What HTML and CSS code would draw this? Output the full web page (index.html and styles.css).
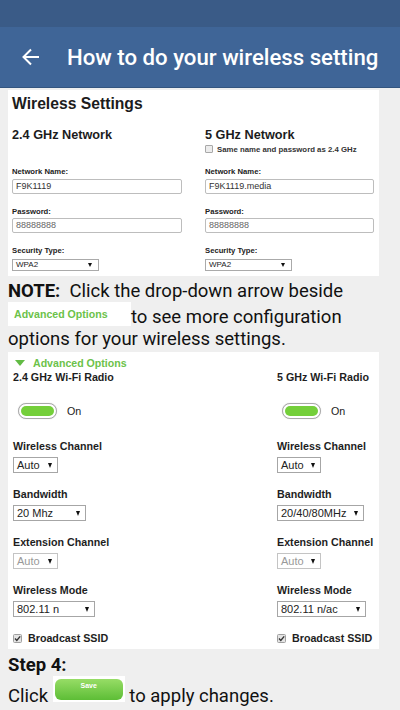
FILE: index.html
```html
<!DOCTYPE html>
<html>
<head>
<meta charset="utf-8">
<link rel="stylesheet" href="styles.css">
</head>
<body>
<div class="status"></div>
<header class="appbar">
  <svg class="back" viewBox="0 0 18 18" width="18" height="18"><path d="M1.5 9H17M9 1.5L1.5 9L9 16.5" fill="none" stroke="#fff" stroke-width="2"/></svg>
  <h1>How to do your wireless setting</h1>
</header>
<main class="content">
  <section class="shot ws">
    <h2>Wireless Settings</h2>
    <div class="ws-grid">
      <div class="ws-col">
        <h3>2.4 GHz Network</h3>
        <div class="same"></div>
        <div class="lbl first">Network Name:</div>
        <div class="inp left">F9K1119</div>
        <div class="lbl">Password:</div>
        <div class="inp left pw">88888888</div>
        <div class="lbl">Security Type:</div>
        <div class="sel"><span>WPA2</span><i class="tri small"></i></div>
      </div>
      <div class="ws-col">
        <h3>5 GHz Network</h3>
        <div class="same"><span class="box"></span>Same name and password as 2.4 GHz</div>
        <div class="lbl first">Network Name:</div>
        <div class="inp right">F9K1119.media</div>
        <div class="lbl">Password:</div>
        <div class="inp right pw">88888888</div>
        <div class="lbl">Security Type:</div>
        <div class="sel"><span>WPA2</span><i class="tri small"></i></div>
      </div>
    </div>
  </section>

  <p class="note"><b>NOTE:</b>&nbsp; <span>Click the drop-down arrow beside</span> <span class="badge">Advanced Options</span><span>to see more configuration</span> <span>options for your wireless settings.</span></p>

  <section class="shot adv">
    <div class="adv-head"><i class="gtri"></i>Advanced Options</div>
    <div class="adv-grid">
      <div class="adv-col">
        <div class="radio-title">2.4 GHz Wi-Fi Radio</div>
        <div class="toggle-row"><span class="toggle"><span class="knob"></span></span><span class="on">On</span></div>
        <div class="f-lbl first">Wireless Channel</div>
        <div class="f-sel w45"><span>Auto</span><i class="tri"></i></div>
        <div class="f-lbl">Bandwidth</div>
        <div class="f-sel w73"><span>20 Mhz</span><i class="tri"></i></div>
        <div class="f-lbl">Extension Channel</div>
        <div class="f-sel w45 dis"><span>Auto</span><i class="tri"></i></div>
        <div class="f-lbl">Wireless Mode</div>
        <div class="f-sel w82"><span>802.11 n</span><i class="tri"></i></div>
        <div class="bc"><svg class="chk" viewBox="0 0 9 9" width="9" height="9"><rect x="0.5" y="0.5" width="8" height="8" rx="1" fill="#e4e4e4" stroke="#a0a0a0"/><path d="M2 4.6L3.8 6.4L7.2 2.4" fill="none" stroke="#333" stroke-width="1.4"/></svg>Broadcast SSID</div>
      </div>
      <div class="adv-col">
        <div class="radio-title">5 GHz Wi-Fi Radio</div>
        <div class="toggle-row"><span class="toggle"><span class="knob"></span></span><span class="on">On</span></div>
        <div class="f-lbl first">Wireless Channel</div>
        <div class="f-sel w44"><span>Auto</span><i class="tri"></i></div>
        <div class="f-lbl">Bandwidth</div>
        <div class="f-sel w87"><span>20/40/80MHz</span><i class="tri"></i></div>
        <div class="f-lbl">Extension Channel</div>
        <div class="f-sel w44 dis"><span>Auto</span><i class="tri"></i></div>
        <div class="f-lbl">Wireless Mode</div>
        <div class="f-sel w89"><span>802.11 n/ac</span><i class="tri"></i></div>
        <div class="bc"><svg class="chk" viewBox="0 0 9 9" width="9" height="9"><rect x="0.5" y="0.5" width="8" height="8" rx="1" fill="#e4e4e4" stroke="#a0a0a0"/><path d="M2 4.6L3.8 6.4L7.2 2.4" fill="none" stroke="#333" stroke-width="1.4"/></svg>Broadcast SSID</div>
      </div>
    </div>
  </section>

  <div class="step">
    <div class="step-title">Step 4:</div>
    <div><span>Click</span> <span class="save-wrap"><span class="save">Save</span></span> <span>to apply changes.</span></div>
  </div>
</main>
</body>
</html>
```
FILE: styles.css
```css
html, body {
  margin: 0;
  padding: 0;
}
body {
  background: #efefef;
  font-family: Roboto, "Liberation Sans", sans-serif;
  width: 400px;
  height: 710px;
  overflow: hidden;
}
.status {
  height: 27px;
  background: #3a5b87;
}
.appbar {
  height: 60px;
  background: #3f6597;
  border-bottom: 1px solid #33557f;
  display: flex;
  align-items: center;
  padding-left: 22px;
  color: #fff;
}
.back {
  flex: none;
  margin-right: 27px;
}
.appbar h1 {
  margin: 0;
  font-size: 22.2px;
  font-weight: 500;
  white-space: nowrap;
}
.content {
  padding: 2px 0 0 8px;
}
.shot {
  background: #fff;
  width: 371px;
  box-sizing: border-box;
  font-family: "Liberation Sans", Arial, sans-serif;
  color: #222;
}

/* Wireless settings screenshot */
.ws {
  height: 186px;
  padding: 5px 0 0 4px;
}
.ws h2 {
  margin: 0;
  font-size: 15.7px;
  line-height: 18px;
  font-weight: bold;
  color: #1c1c1c;
}
.ws-grid {
  display: grid;
  grid-template-columns: 193px 1fr;
  margin-top: 15px;
}
.ws-col {
  display: flex;
  flex-direction: column;
  align-items: flex-start;
}
.ws h3 {
  margin: 0;
  font-size: 12.7px;
  line-height: 15px;
  font-weight: bold;
  color: #1c1c1c;
}
.same {
  height: 12px;
  display: flex;
  align-items: center;
  font-size: 7.8px;
  font-weight: bold;
  color: #333;
  white-space: nowrap;
}
.same .box {
  width: 6px;
  height: 6px;
  border: 1px solid #a8a8a8;
  background: #ececec;
  border-radius: 1px;
  margin-right: 4px;
}
.lbl {
  font-size: 7.7px;
  line-height: 10px;
  font-weight: bold;
  color: #222;
  margin-top: 13px;
}
.lbl.first {
  margin-top: 12px;
}
.inp {
  margin-top: 2px;
  height: 15px;
  box-sizing: border-box;
  border: 1px solid #bdbdbd;
  border-radius: 2px;
  font-size: 9px;
  line-height: 13px;
  padding-left: 3px;
  color: #333;
}
.inp.left { width: 170px; }
.inp.right { width: 169px; }
.inp.pw {
  margin-top: 1px;
  color: #666;
}
.sel {
  margin-top: 2.5px;
  width: 87px;
  height: 12px;
  box-sizing: border-box;
  border: 1px solid #aaa;
  display: flex;
  align-items: center;
  justify-content: space-between;
  padding: 0 6px 0 3px;
  font-size: 8px;
  color: #222;
}
.tri {
  display: block;
  width: 0;
  height: 0;
  border-left: 2.5px solid transparent;
  border-right: 2.5px solid transparent;
  border-top: 5px solid #111;
}
.tri.small {
  border-left-width: 2px;
  border-right-width: 2px;
  border-top-width: 4px;
}

/* Note */
.note {
  margin: 4px 0 2px;
  padding-right: 8px;
  font-size: 18.5px;
  line-height: 22px;
  color: #111;
}
.note b {
  font-weight: bold;
}
.badge {
  display: inline-block;
  overflow: hidden;
  vertical-align: -3px;
  width: 123px;
  height: 24px;
  box-sizing: border-box;
  padding: 2px 0 0 6px;
  background: #fff;
  font-family: "Liberation Sans", Arial, sans-serif;
  font-weight: bold;
  font-size: 10.6px;
  line-height: 20px;
  color: #6cc24a;
  white-space: nowrap;
}

/* Advanced options screenshot */
.adv {
  height: 297px;
  padding: 5px 0 0 5px;
}
.adv-head {
  display: flex;
  align-items: center;
  height: 12px;
  font-size: 10.6px;
  font-weight: bold;
  color: #6cc24a;
}
.gtri {
  display: block;
  width: 0;
  height: 0;
  margin-left: 2px;
  margin-right: 8px;
  border-left: 5px solid transparent;
  border-right: 5px solid transparent;
  border-top: 6px solid #62bb44;
}
.adv-grid {
  display: grid;
  grid-template-columns: 264px 1fr;
  margin-top: 2px;
}
.adv-col {
  display: flex;
  flex-direction: column;
  align-items: flex-start;
}
.radio-title,
.f-lbl,
.bc {
  font-size: 10.7px;
  line-height: 13px;
  font-weight: bold;
  color: #1e1e1e;
  white-space: nowrap;
}
.toggle-row {
  display: flex;
  align-items: center;
  margin-top: 19px;
  height: 16px;
  padding-left: 5px;
}
.toggle {
  display: block;
  width: 39px;
  height: 16px;
  box-sizing: border-box;
  border: 1px solid #a9a9a9;
  border-radius: 8px;
  padding: 2px;
  background: #fff;
  box-shadow: 0 0 1px #ccc;
}
.knob {
  display: block;
  height: 100%;
  border-radius: 5px;
  background: #74cf3a;
}
.on {
  margin-left: 10px;
  font-size: 10.7px;
  color: #222;
}
.f-lbl {
  margin-top: 15px;
}
.f-lbl.first {
  margin-top: 21px;
}
.f-sel {
  margin-top: 4px;
  height: 16px;
  box-sizing: border-box;
  border: 1px solid #a6a6a6;
  display: flex;
  align-items: center;
  justify-content: space-between;
  padding: 0 5px 0 3px;
  font-size: 11px;
  color: #222;
}
.f-sel.dis {
  color: #999;
  border-color: #c4c4c4;
}
.w44 { width: 44px; }
.w45 { width: 45px; }
.w73 { width: 73px; }
.w82 { width: 82px; }
.w87 { width: 87px; }
.w89 { width: 89px; }
.bc {
  margin-top: 15px;
  display: flex;
  align-items: center;
}
.chk {
  display: block;
  margin-right: 6px;
}

/* Step 4 */
.step {
  padding-top: 5px;
  font-size: 18.5px;
  line-height: 22px;
  color: #111;
}
.step-title {
  font-weight: bold;
}
.save-wrap {
  display: inline-block;
  overflow: hidden;
  vertical-align: baseline;
  width: 72px;
  height: 26px;
  box-sizing: border-box;
  padding: 3px 2px 2px;
  background: #fff;
}
.save {
  display: block;
  height: 21px;
  border-radius: 6px;
  background: linear-gradient(#97dd66, #5dbd36);
  color: #fff;
  font-family: "Liberation Sans", Arial, sans-serif;
  font-weight: bold;
  font-size: 7px;
  line-height: 13px;
  text-align: center;
}
```
